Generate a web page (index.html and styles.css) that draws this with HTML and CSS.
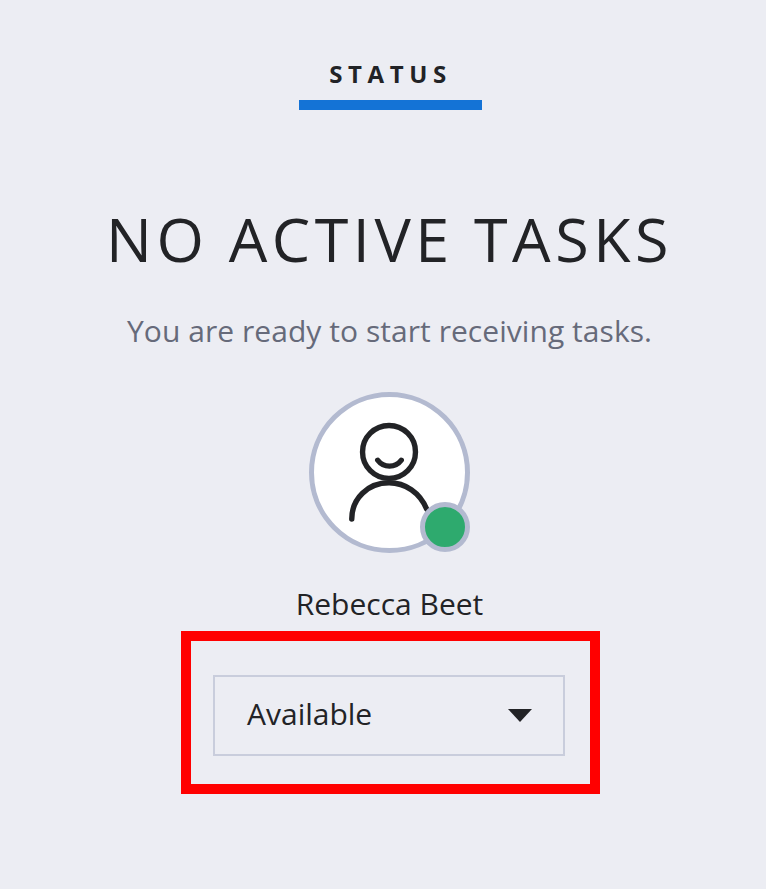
FILE: index.html
```html
<!DOCTYPE html>
<html lang="en">
<head>
  <meta charset="UTF-8">
  <title>Status</title>
  <link rel="stylesheet" href="styles.css">
</head>
<body>

  <div class="status-tab">
    <span class="status-label">STATUS</span>
  </div>

  <h1>NO ACTIVE TASKS</h1>
  <p class="sous-titre">You are ready to start receiving tasks.</p>

  <!-- avatar -->
  <div class="avatar">
    <svg class="avatar-icon" viewBox="0 0 154 154" width="154" height="154" fill="none" stroke="#222326" stroke-width="5.5" stroke-linecap="round">
      <circle cx="76.5" cy="55.5" r="27"/>
      <path d="M65 64 C71 72 83 72 89 64"/>
      <path d="M38.5 124 C38.5 103 55 87 76.5 87 C93 87 108 97 115 114"/>
    </svg>
    <span class="badge"></span>
  </div>

  <p class="nom">Rebecca Beet</p>

  <div class="cadre-rouge">
    <div class="select">
      <span>Available</span>
      <span class="fleche"></span>
    </div>
  </div>

</body>
</html>
```

FILE: styles.css
```css
body {
  background-color: #ecedf3;
  color: #222326;
  font-family: "Open Sans", "Noto Sans", sans-serif;
  margin: 0;
  padding: 0;
  height: 889px;
  overflow: hidden;
  display: flex;
  flex-direction: column;
  align-items: center;
}

.status-tab {
  margin-top: 58px;
  margin-left: 15px;
  width: 183px;
  height: 52px;
  box-sizing: border-box;
  border-bottom: 10px solid #1473d6;
  text-align: center;
}

.status-label {
  display: block;
  font-size: 24px;
  line-height: 32px;
  font-weight: 700;
  letter-spacing: 5.6px;
}

h1 {
  margin: 94px 0 0 13px;
  font-size: 61px;
  line-height: 70px;
  font-weight: 400;
  letter-spacing: 4.5px;
  white-space: nowrap;
}

.sous-titre {
  margin: 38px 0 0 13px;
  font-size: 30px;
  line-height: 38px;
  letter-spacing: 0.05px;
  color: #666a7a;
  white-space: nowrap;
}

.avatar {
  position: relative;
  margin: 42px 0 0 13px;
  width: 161px;
  height: 161px;
  box-sizing: border-box;
  border: 5px solid #b3bad0;
  border-radius: 50%;
  background-color: white;
  display: flex;
  align-items: center;
  justify-content: center;
}

.badge {
  position: absolute;
  right: -5px;
  bottom: -4px;
  width: 50px;
  height: 50px;
  box-sizing: border-box;
  border: 5px solid #b3bad0;
  border-radius: 50%;
  background-color: #2eaa6e;
}

.nom {
  margin: 32px 0 0 13px;
  font-size: 30px;
  line-height: 38px;
}

.cadre-rouge {
  margin: 8px 0 0 15px;
  width: 419px;
  height: 163px;
  box-sizing: border-box;
  border: 10px solid #ff0000;
  padding: 34px 25px 0 22px;
}

.select {
  height: 81px;
  box-sizing: border-box;
  border: 2px solid #c9cddc;
  padding: 0 31px 4px 32px;
  display: flex;
  align-items: center;
  justify-content: space-between;
  font-size: 30px;
}

.fleche {
  width: 0;
  height: 0;
  margin-top: 4px;
  border-left: 12px solid transparent;
  border-right: 12px solid transparent;
  border-top: 13px solid #222326;
}
```
